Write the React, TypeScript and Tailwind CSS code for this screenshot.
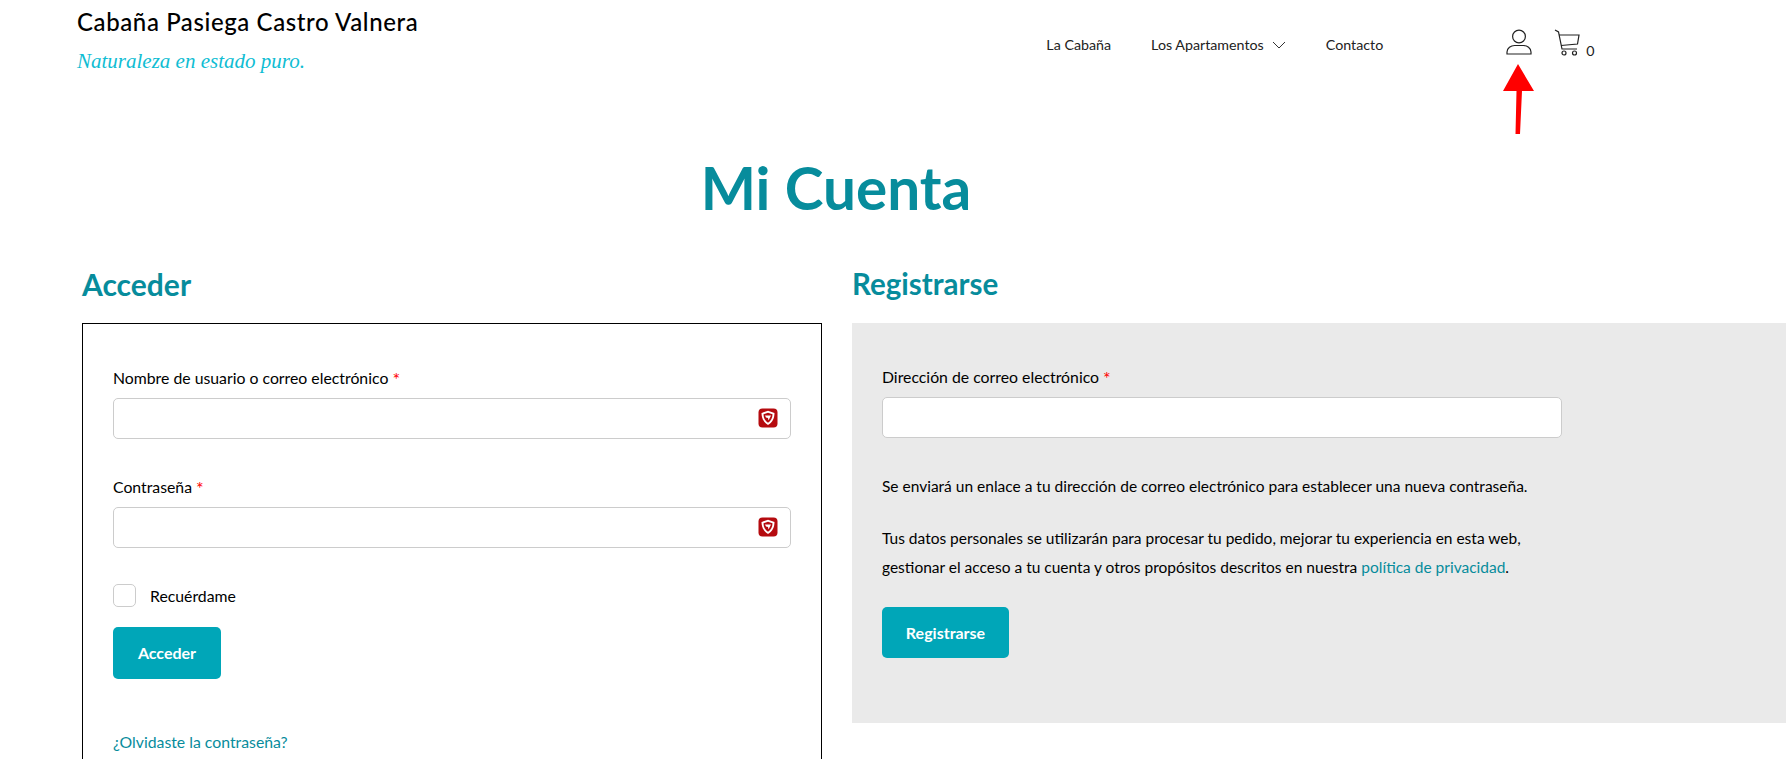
import React from "react";

const BraveIcon = () => (
  <svg width="20" height="20" viewBox="0 0 20 20" className="absolute right-[13px] top-[10px]">
    <rect x="0.500" y="0.500" width="19" height="19" rx="4" fill="#b50b0f" />
    <path d="M3.500 5 L10 2.800 L16.500 5 C16.500 10.500 14 14.800 10 17 C6 14.800 3.500 10.500 3.500 5 Z" fill="#fff" />
    <path d="M5.500 6.300 L10 4.800 L14.500 6.300 C14.500 10 12.800 13 10 14.700 C7.200 13 5.500 10 5.500 6.300 Z" fill="#b50b0f" />
    <path d="M7 7.500 h6 l-1.500 3 l-1 2 l-0.500 -2.500 l-2 -0.500 z" fill="#fff" />
  </svg>
);

const UserIcon = () => (
  <svg width="26" height="26" viewBox="0 0 26 26" fill="none" stroke="#222" strokeWidth="1.2">
    <circle cx="13" cy="7.500" r="6.400" />
    <path d="M1 25 v-2 c0-4 4-6.500 7.500-6.500 h9 c3.500 0 7.500 2.500 7.500 6.500 v2 z" />
  </svg>
);

const CartIcon = () => (
  <svg width="26" height="27" viewBox="0 0 26 27" fill="none" stroke="#222" strokeWidth="1.2">
    <path d="M1 1 L4.500 3 L8 20 H23" />
    <path d="M5 6 H25 L23.500 15 L7 16.500" />
    <circle cx="10" cy="24" r="2" />
    <circle cx="20.500" cy="24" r="2" />
  </svg>
);

const Field = ({ label, icon }: { label: string; icon?: boolean }) => (
  <div>
    <label className="block text-[15.800px] leading-[24px] text-black">
      {label} <span className="align-[-2px] text-[18px] leading-[18px] text-[#ff0000]">*</span>
    </label>
    <div className="relative mt-[8px]">
      <input className="block h-[41px] w-full rounded-[5px] border border-[#cccccc] bg-white" />
      {icon && <BraveIcon />}
    </div>
  </div>
);

export default function App() {
  return (
    <div className="h-[759px] overflow-hidden bg-white font-['Lato',sans-serif] text-black">
      <header className="flex h-[120px] pl-[77px]">
        <div className="pt-[6px]">
          <div className="text-[24px] leading-[32px] font-medium tracking-[0.6px] text-black">
            Cabaña Pasiega Castro Valnera
          </div>
          <div className="mt-[8px] font-['Liberation_Serif',serif] text-[21px] leading-[30px] text-[#0fbdd3] italic">
            Naturaleza en estado puro.
          </div>
        </div>
        <nav className="ml-[628px] flex h-[89px] items-center gap-[40px] text-[14.250px] text-[#222]">
          <a>La Cabaña</a>
          <a className="flex items-center">
            Los Apartamentos
            <svg width="14" height="8" viewBox="0 0 14 8" fill="none" stroke="#333" className="ml-[8px]">
              <path d="M1 1 L7 7 L13 1" />
            </svg>
          </a>
          <a>Contacto</a>
        </nav>
        <div className="relative ml-[123px] flex h-[90px] items-start pt-[29px]">
          <UserIcon />
          <div className="ml-[22px]">
            <CartIcon />
          </div>
          <span className="mt-[11px] ml-[6px] text-[14.250px] text-[#222]">0</span>
          <svg width="34" height="72" viewBox="0 0 34 72" className="absolute top-[64px] left-[-4px]">
            <path d="M16 0 L32 27 H20 L18 70 H13.500 L14.500 27 H1 Z" fill="#ff0000" />
          </svg>
        </div>
      </header>

      <h1 className="mt-[29px] pr-[114px] text-center text-[58.500px] leading-[76px] font-bold text-[#078c9c]">
        Mi Cuenta
      </h1>

      <div className="mt-[39px] flex pl-[82px]">
        <div className="w-[740px]">
          <h2 className="text-[30px] leading-[40px] font-bold text-[#078c9c]">Acceder</h2>
          <div className="mt-[19px] h-[500px] border border-black px-[30px] pt-[42px] pb-[30px]">
            <Field label="Nombre de usuario o correo electrónico" icon />
            <div className="mt-[36px]">
              <Field label="Contraseña" icon />
            </div>
            <div className="mt-[36px] flex items-center gap-[14px]">
              <span className="h-[23px] w-[23px] rounded-[5px] border border-[#cccccc]" />
              <span className="text-[15.800px]">Recuérdame</span>
            </div>
            <button className="mt-[19px] h-[52px] w-[108px] rounded-[5px] bg-[#00a6b8] text-[16px] font-bold text-white">
              Acceder
            </button>
            <a className="mt-[51px] block text-[15.800px] leading-[24px] text-[#078c9c]">¿Olvidaste la contraseña?</a>
          </div>
        </div>

        <div className="ml-[30px] flex-1">
          <h2 className="text-[29.500px] leading-[40px] font-bold text-[#078c9c]">Registrarse</h2>
          <div className="mt-[19px] h-[400px] bg-[#eaeaea] pt-[42px] pl-[30px]">
            <div className="w-[680px]">
              <Field label="Dirección de correo electrónico" />
            </div>
            <p className="mt-[34px] text-[15.500px] leading-[29px]">
              Se enviará un enlace a tu dirección de correo electrónico para establecer una nueva contraseña.
            </p>
            <p className="mt-[23px] w-[690px] text-[15.500px] leading-[29px]">
              Tus datos personales se utilizarán para procesar tu pedido, mejorar tu experiencia en esta web,
              <br />
              gestionar el acceso a tu cuenta y otros propósitos descritos en nuestra{" "}
              <a className="text-[#078c9c]">política de privacidad</a>.
            </p>
            <button className="mt-[25px] h-[51px] w-[127px] rounded-[5px] bg-[#00a6b8] text-[16px] font-bold text-white">
              Registrarse
            </button>
          </div>
        </div>
      </div>
    </div>
  );
}
